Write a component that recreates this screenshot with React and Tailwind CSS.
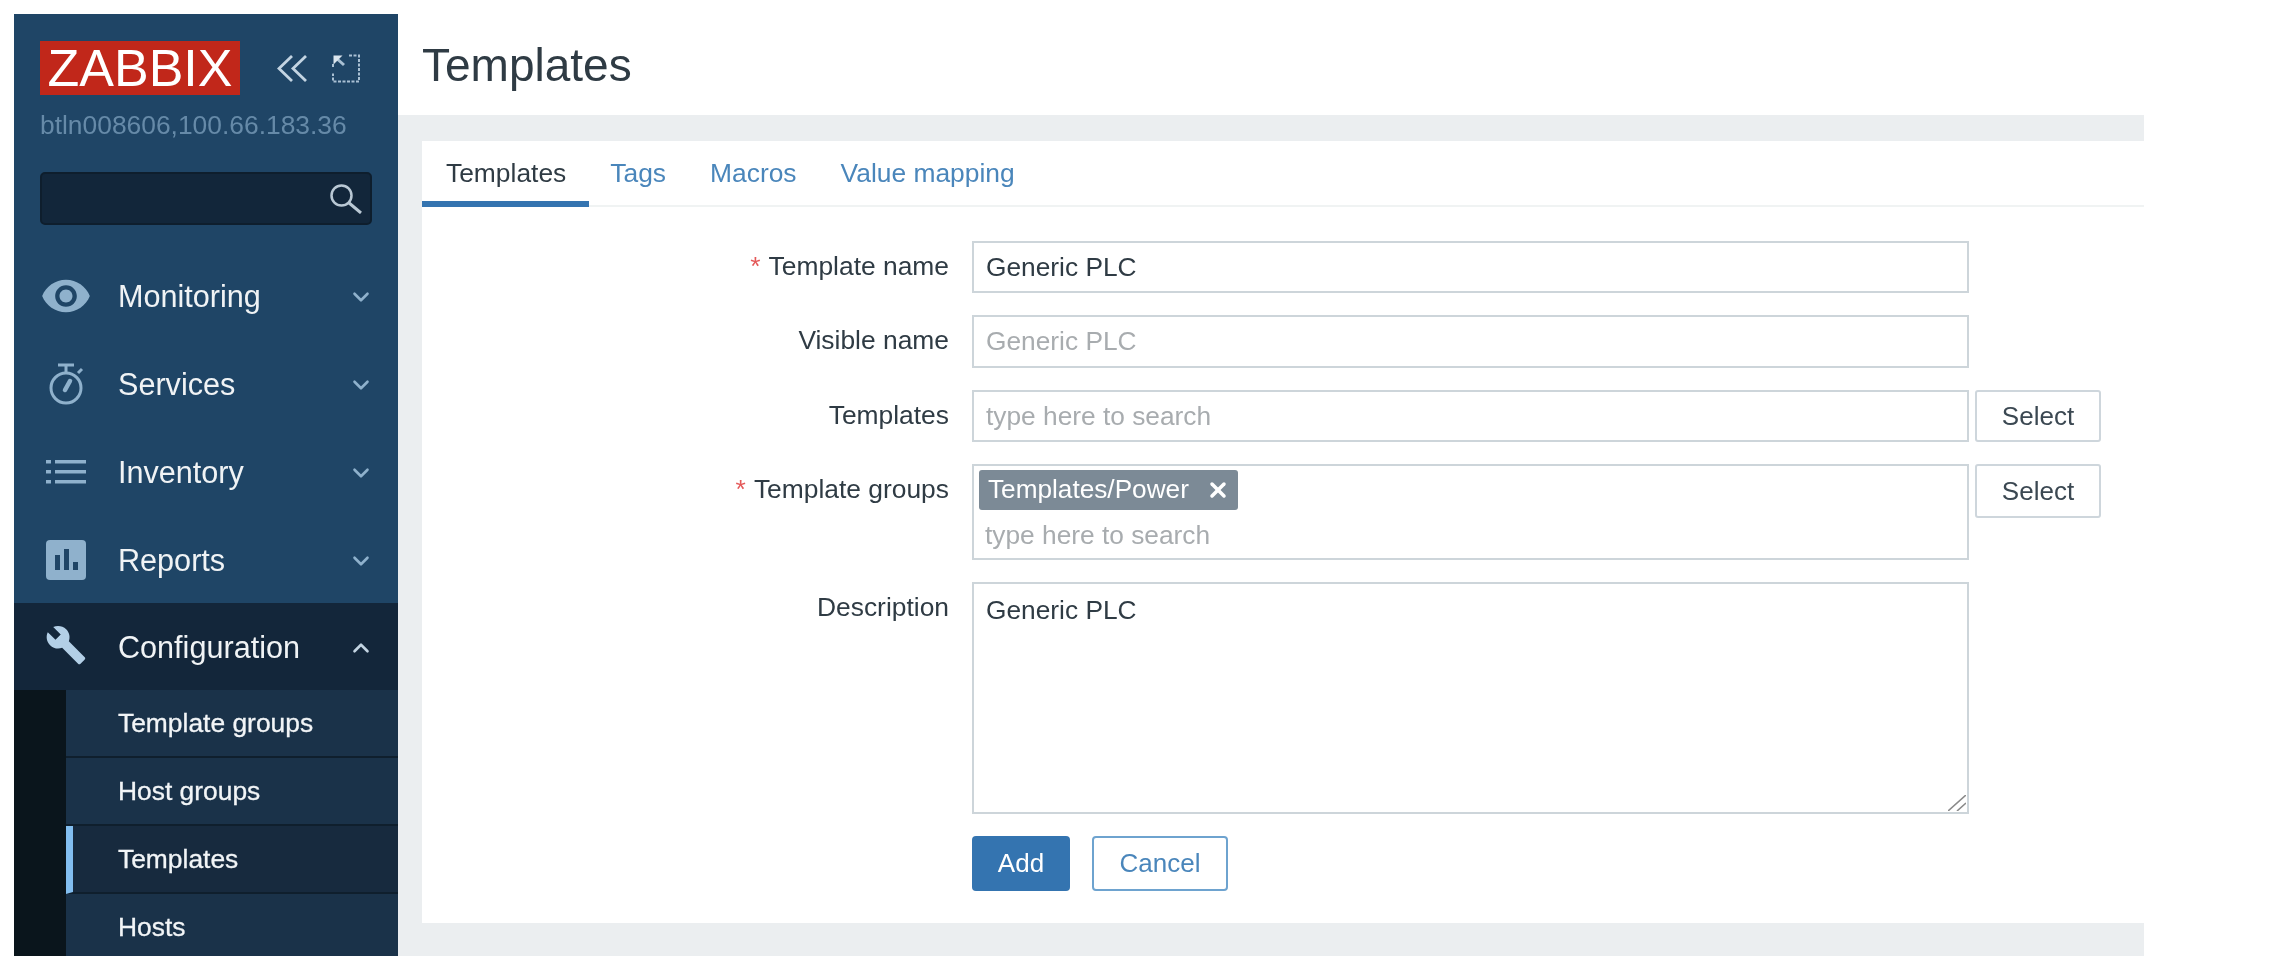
import React from 'react';
import { ChevronDown, ChevronUp, X } from 'lucide-react';

const EyeIcon = () => (
  <svg viewBox="0 0 24 24" className="w-[52px] h-[52px] fill-[#8fb1cc]">
    <path d="M12 4.5C7 4.5 2.73 7.61 1 12c1.73 4.39 6 7.5 11 7.5s9.27-3.11 11-7.5c-1.73-4.39-6-7.5-11-7.5zM12 17c-2.76 0-5-2.24-5-5s2.24-5 5-5 5 2.24 5 5-2.24 5-5 5zm0-8c-1.66 0-3 1.34-3 3s1.34 3 3 3 3-1.34 3-3-1.34-3-3-3z" />
  </svg>
);

const TimerIcon = () => (
  <svg viewBox="0 0 40 44" className="w-[40px] h-[44px] fill-none stroke-[#8fb1cc]" strokeWidth="3">
    <circle cx="20" cy="26" r="15" />
    <path d="M12 3h16M20 3v8M32 11l4-4" />
    <path d="M19 28l5-9" strokeWidth="4.5" strokeLinecap="round" />
  </svg>
);

const ListIcon = () => (
  <svg viewBox="0 0 40 24" className="w-[40px] h-[24px] fill-[#8fb1cc]">
    <rect x="0" y="0" width="5" height="3.5" />
    <rect x="0" y="10" width="5" height="3.5" />
    <rect x="0" y="20" width="5" height="3.5" />
    <rect x="9" y="0" width="31" height="3.5" />
    <rect x="9" y="10" width="31" height="3.5" />
    <rect x="9" y="20" width="31" height="3.5" />
  </svg>
);

const ReportsIcon = () => (
  <svg viewBox="0 0 40 40" className="w-[40px] h-[40px]">
    <rect width="40" height="40" rx="4" className="fill-[#8fb1cc]" />
    <rect x="9" y="15" width="5" height="15" className="fill-[#1f4566]" />
    <rect x="18" y="9" width="5" height="21" className="fill-[#1f4566]" />
    <rect x="27" y="22" width="5" height="8" className="fill-[#1f4566]" />
  </svg>
);

const WrenchIcon = () => (
  <svg viewBox="0 0 24 24" className="w-[42px] h-[42px] -mt-[3px] fill-[#b3cfe6]">
    <path d="M22.7 19l-9.1-9.1c.9-2.3.4-5-1.5-6.9-2-2-5-2.4-7.4-1.3L9 6 6 9 1.6 4.7C.4 7.1.9 10.1 2.9 12.1c1.9 1.9 4.6 2.4 6.9 1.5l9.1 9.1c.4.4 1 .4 1.4 0l2.3-2.3c.5-.4.5-1.1.1-1.4z" />
  </svg>
);

const navItems = [
  { label: 'Monitoring', icon: <EyeIcon /> },
  { label: 'Services', icon: <TimerIcon /> },
  { label: 'Inventory', icon: <ListIcon /> },
  { label: 'Reports', icon: <ReportsIcon /> },
];

const subItems = [
  { label: 'Template groups' },
  { label: 'Host groups' },
  { label: 'Templates', active: true },
  { label: 'Hosts' },
];

const Sidebar = () => (
  <aside className="w-[384px] shrink-0 bg-[#1f4566] flex flex-col overflow-hidden">
    {/* Logo + collapse controls */}
    <div className="pt-[27px] pl-[26px] flex items-center">
      <div className="w-[200px] h-[54px] bg-[#c1271a] flex items-center justify-center text-white text-[52px] leading-none">
        ZABBIX
      </div>
      <svg viewBox="0 0 31 27" className="w-[31px] h-[27px] ml-[37px] fill-none stroke-[#c3d4e2]" strokeWidth="2.8">
        <path d="M15 1L2 13.5 15 26M29 1L16 13.5 29 26" />
      </svg>
      <svg viewBox="0 0 28 29" className="w-[28px] h-[29px] ml-[24px] fill-none stroke-[#a9c0d3]" strokeWidth="2">
        <path d="M17 1.5h10v26H1v-8" strokeDasharray="3 1.5" />
        <path d="M1 13v-3" />
        <path d="M3 3l9 8" strokeWidth="3" />
        <path d="M1.5 1.5h9l-9 9z" className="fill-[#dbe6ee] stroke-none" />
      </svg>
    </div>
    <div className="mt-[15px] pl-[26px] h-[30px] leading-[30px] text-[26.4px] text-[#668aa8]">btln008606,100.66.183.36</div>

    {/* Search */}
    <div className="mt-[32px] mx-[26px] h-[53px] bg-[#12263a] border-2 border-[#0e1e2d] rounded-[5px] flex items-center justify-end pr-[8px]">
      <svg viewBox="0 0 32 30" className="w-[32px] h-[30px] fill-none stroke-[#b9c8d4]">
        <circle cx="11.5" cy="11.5" r="10" strokeWidth="2.5" />
        <path d="M18.5 18.5L31 29" strokeWidth="3" />
      </svg>
    </div>

    <nav className="mt-[27px] flex flex-col">
      {navItems.map((item) => (
        <div key={item.label} className="h-[88px] flex items-center">
          <div className="w-[52px] ml-[26px] flex justify-center">{item.icon}</div>
          <span className="ml-[26px] flex-1 pt-[2px] text-[30.6px] text-[#f0f3f5]">{item.label}</span>
          <ChevronDown size={26} strokeWidth={2.4} className="mr-[24px] mt-[2px] text-[#8fb1cc]" />
        </div>
      ))}
      <div className="h-[87px] -mt-[1px] bg-[#13263a] flex items-center">
        <div className="w-[52px] ml-[26px] flex justify-center"><WrenchIcon /></div>
        <span className="ml-[26px] flex-1 pt-[3px] text-[30.6px] text-[#f0f3f5]">Configuration</span>
        <ChevronUp size={26} strokeWidth={2.4} className="mr-[24px] mt-[2px] text-[#c3d4e2]" />
      </div>
    </nav>

    {/* Submenu */}
    <div className="flex-1 min-h-0 bg-[#0a151c] pl-[52px] overflow-hidden">
      {subItems.map((item) => (
        <div
          key={item.label}
          className={
            item.active
              ? 'h-[68px] flex items-center pt-[2px] bg-[#172a3e] border-b-2 border-[#0f1f2d] border-l-[7px] border-l-[#82bef0] pl-[45px] text-[26.4px] text-[#f2f5f7] [-webkit-text-stroke:0.3px_#f2f5f7]'
              : 'h-[68px] flex items-center pt-[2px] bg-[#1a3249] border-b-2 border-[#0f1f2d] pl-[52px] text-[26.4px] text-[#f2f5f7] [-webkit-text-stroke:0.3px_#f2f5f7]'
          }
        >
          {item.label}
        </div>
      ))}
    </div>
  </aside>
);

const Field = ({ label, required, children, after }) => (
  <div className="flex items-start">
    <label className="w-[527px] shrink-0 pt-[10px] text-right text-[26.4px] leading-[30px] text-[#2f3b44]">
      {required && <span className="text-[#e45959] mr-[8px]">*</span>}
      {label}
    </label>
    <div className="ml-[23px] w-[997px] shrink-0">{children}</div>
    {after}
  </div>
);

const SelectBtn = ({ h }) => (
  <button type="button" className={`${h} ml-[6px] w-[126px] border-2 border-[#ced6dc] rounded-[3px] bg-white text-[26px] text-[#3b4852]`}>
    Select
  </button>
);

const inputCls = 'block w-full border-2 border-[#cdd5da] bg-white px-[12px] text-[26.3px] text-[#2f3b44] placeholder:text-[#a8acaf] outline-none';

const App = () => (
  <div className="w-screen h-screen bg-white pt-[14px] pl-[14px] pr-[132px] pb-[22px] flex overflow-hidden blur-[0.5px] font-['Liberation_Sans',Arial,sans-serif]">
    <Sidebar />
    <main className="flex-1 min-w-0 flex flex-col">
      <header className="h-[101px] shrink-0 bg-white pl-[24px] flex items-center">
        <h1 className="text-[46px] text-[#2f3b44] leading-none">Templates</h1>
      </header>
      <div className="flex-1 min-h-0 bg-[#ebeef0] pl-[24px] pt-[26px] pb-[33px]">
        <div className="h-full bg-white">
          {/* Tabs */}
          <div className="h-[66px] flex border-b-2 border-[#f0f3f3] text-[26.4px]">
            <div className="h-[66px] pl-[24px] pr-[23px] pt-[5px] flex items-center border-b-[6px] border-[#3474b0] text-[#2f3b44]">Templates</div>
            <div className="px-[21px] flex items-center pt-[1px] text-[#4a86bb]">Tags</div>
            <div className="pl-[23px] pr-[22px] flex items-center pt-[1px] text-[#4a86bb]">Macros</div>
            <div className="px-[22px] flex items-center pt-[1px] text-[#4a86bb]">Value mapping</div>
          </div>

          {/* Form */}
          <form className="pt-[34px] flex flex-col gap-[22px]">
            <Field label="Template name" required>
              <input readOnly value="Generic PLC" className={`${inputCls} h-[52px]`} />
            </Field>
            <Field label="Visible name">
              <input readOnly placeholder="Generic PLC" className={`${inputCls} h-[53px]`} />
            </Field>
            <Field label="Templates" after={<SelectBtn h="h-[52px]" />}>
              <input readOnly placeholder="type here to search" className={`${inputCls} h-[52px]`} />
            </Field>
            <Field label="Template groups" required after={<SelectBtn h="h-[54px]" />}>
              <div className="h-[96px] border-2 border-[#cdd5da] pt-[4px] pl-[5px]">
                <div className="inline-flex h-[40px] items-center rounded-[3px] bg-[#7c8a96] pl-[9px] pr-[8px] text-[26.2px] text-white">
                  Templates/Power
                  <X size={24} strokeWidth={3.5} className="ml-[17px]" />
                </div>
                <div className="mt-[10px] pl-[6px] text-[26.3px] leading-[30px] text-[#a8acaf]">type here to search</div>
              </div>
            </Field>
            <Field label="Description">
              <div className="relative">
                <textarea readOnly value="Generic PLC" className={`${inputCls} h-[232px] py-[11px] leading-[30px] resize-none`} />
                {/* resize grip */}
                <svg viewBox="0 0 18 16" className="absolute right-[3px] bottom-[3px] w-[18px] h-[16px] fill-none stroke-[#8a8a8a]" strokeWidth="1.6">
                  <path d="M0 16L18 0M9 16L18 8" />
                </svg>
              </div>
            </Field>
            <div className="pl-[550px] flex gap-[22px]">
              <button type="button" className="w-[98px] h-[55px] rounded-[4px] bg-[#3474b0] text-[26px] text-white">Add</button>
              <button type="button" className="w-[136px] h-[55px] rounded-[4px] border-2 border-[#6ea3cf] bg-white text-[26px] text-[#4a86bb]">Cancel</button>
            </div>
          </form>
        </div>
      </div>
    </main>
  </div>
);

export default App;
